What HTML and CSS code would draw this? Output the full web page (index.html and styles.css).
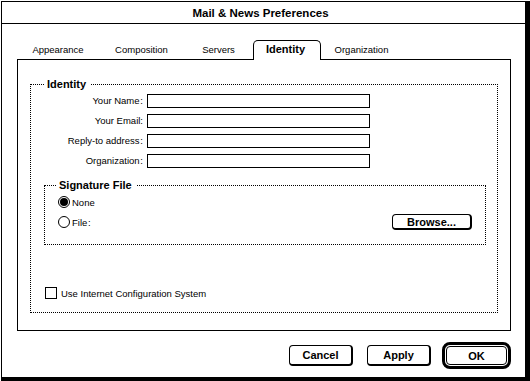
FILE: index.html
```html
<!DOCTYPE html>
<html>
<head>
<meta charset="utf-8">
<link rel="stylesheet" href="styles.css">
</head>
<body>
<div class="window">
  <div class="titlebar">Mail &amp; News Preferences</div>
  <div class="content">
    <div class="tabs">
      <div class="tab">Appearance</div>
      <div class="tab">Composition</div>
      <div class="tab">Servers</div>
      <div class="tab selected">Identity</div>
      <div class="tab">Organization</div>
    </div>
    <div class="panel">
      <fieldset class="group identity">
        <legend>Identity</legend>
        <div class="fields">
          <label class="lbl">Your Name&#8202;:</label><div class="input"></div>
          <label class="lbl">Your Email:</label><div class="input"></div>
          <label class="lbl">Reply-to address&#8202;:</label><div class="input"></div>
          <label class="lbl">Organization&#8202;:</label><div class="input"></div>
        </div>
        <fieldset class="group sig">
          <legend>Signature File</legend>
          <div class="radio-row">
            <span class="radio">
              <svg width="12" height="12" viewBox="0 0 12 12"><circle cx="6" cy="6" r="5.5" fill="#fff" stroke="#000"/><circle cx="6" cy="6" r="4" fill="#000"/></svg>
            </span>
            <span class="rtext">None</span>
          </div>
          <div class="radio-row">
            <span class="radio">
              <svg width="12" height="12" viewBox="0 0 12 12"><circle cx="6" cy="6" r="5.5" fill="#fff" stroke="#000"/></svg>
            </span>
            <span class="rtext">File&#8202;:</span>
            <span class="spacer"></span>
            <button class="btn browse">Browse...</button>
          </div>
        </fieldset>
        <div class="check-row">
          <span class="checkbox"></span>
          <span class="ctext">Use Internet Configuration System</span>
        </div>
      </fieldset>
    </div>
    <div class="buttons">
      <button class="btn cancel">Cancel</button>
      <button class="btn apply">Apply</button>
      <span class="default-ring"><button class="btn ok">OK</button></span>
    </div>
  </div>
</div>
</body>
</html>
```
FILE: styles.css
```css
* { box-sizing: border-box; }
html, body { margin: 0; padding: 0; background: #fff; }
body {
  font-family: "Liberation Sans", Arial, sans-serif;
  font-size: 9.5px;
  color: #000;
}
.window {
  margin: 1px 0 0 1px;
  width: 529px;
  height: 380px;
  border-style: solid;
  border-color: #000;
  border-width: 1px 5px 4px 1px;
  background: #fff;
  display: flex;
  flex-direction: column;
}
.titlebar {
  height: 22px;
  border-bottom: 1px solid #000;
  font-weight: bold;
  font-size: 11.5px;
  display: flex;
  align-items: center;
  justify-content: center;
  padding-right: 6px;
  padding-top: 1px;
}
.content {
  flex: 1;
  padding: 16px 14px 0 15px;
  display: flex;
  flex-direction: column;
}
.tabs {
  display: grid;
  grid-template-columns: 82px 85px 69px 68px 81px;
  height: 20px;
  position: relative;
  z-index: 1;
  margin-bottom: -1px;
}
.tab {
  display: flex;
  align-items: center;
  justify-content: center;
  border: 1px solid transparent;
  border-bottom: none;
  padding-bottom: 3px;
}
.tab.selected {
  border-color: #000;
  border-radius: 5px 5px 0 0;
  background: #fff;
  font-weight: bold;
  font-size: 11px;
  padding-right: 3px;
  height: 20px;
}
.panel {
  height: 272px;
  border: 1px solid #000;
  padding: 18px 12px 17px 12px;
  display: flex;
  flex-direction: column;
}
.group {
  border: 1px dotted #000;
  margin: 0;
  padding: 0;
  min-width: 0;
}
.group legend {
  font-weight: bold;
  font-size: 11px;
  line-height: 13px;
  padding: 0 4px 0 3px;
}
.identity {
  flex: 1;
  display: flex;
  flex-direction: column;
}
.identity > legend { margin-left: 13px; }
.fields {
  display: grid;
  grid-template-columns: 112px 223px;
  column-gap: 4px;
  row-gap: 6px;
  margin-top: 3px;
}
.lbl {
  text-align: right;
  height: 14px;
  line-height: 14px;
}
.input {
  height: 14px;
  border: 1px solid #000;
  background: #fff;
}
.sig {
  margin: 11px 11px 0 13px;
  padding: 4px 12px 16px 13px;
}
.sig > legend { margin-left: -2px; }
.radio-row {
  display: flex;
  align-items: center;
  height: 12px;
}
.radio-row + .radio-row { margin-top: 8px; }
.radio { width: 12px; height: 12px; display: block; }
.radio svg { display: block; }
.rtext { margin-left: 2px; }
.spacer { flex: 1; }
.btn {
  font-family: "Liberation Sans", Arial, sans-serif;
  font-weight: bold;
  font-size: 11px;
  color: #000;
  background: #fff;
  border-style: solid;
  border-color: #000;
  border-width: 1px 2px 2px 1px;
  border-radius: 4px;
  padding: 0;
  margin: 0;
  display: flex;
  align-items: center;
  justify-content: center;
}
.browse {
  width: 80px;
  height: 16px;
  padding-top: 1px;
  margin-right: 1px;
}
.check-row {
  display: flex;
  align-items: center;
  margin: 42px 0 0 14px;
}
.checkbox {
  width: 12px;
  height: 12px;
  border: 1px solid #000;
  display: block;
}
.ctext { margin-left: 4px; }
.buttons {
  display: flex;
  justify-content: flex-end;
  align-items: center;
  margin-top: 11px;
  height: 27px;
}
.cancel, .apply {
  width: 64px;
  height: 21px;
}
.apply { margin-left: 14px; }
.default-ring {
  margin-left: 11px;
  width: 69px;
  height: 27px;
  border: 3px solid #000;
  border-radius: 8px;
  padding: 1px;
  display: flex;
}
.ok {
  flex: 1;
  border-width: 1px;
  border-radius: 4px;
}
```
